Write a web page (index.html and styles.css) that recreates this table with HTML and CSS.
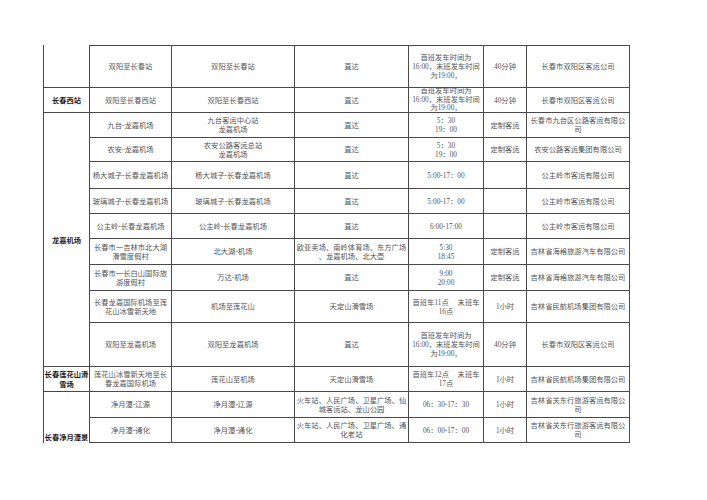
FILE: index.html
```html
<!DOCTYPE html>
<html lang="zh-CN">
<head>
<meta charset="utf-8">
<title>长春客运线路</title>
<link rel="stylesheet" href="styles.css">
</head>
<body>
<div class="sheet">
  <!-- row 1 -->
  <div class="c l h"></div>
  <div class="c t">双阳至长春站</div>
  <div class="c t">双阳至长春站</div>
  <div class="c t">直达</div>
  <div class="c t">首班发车时间为<br>16:00，末班发车时间<br>为19:00，</div>
  <div class="c t">40分钟</div>
  <div class="c t">长春市双阳区客运公司</div>
  <!-- row 2 -->
  <div class="c l h">长春西站</div>
  <div class="c">双阳至长春西站</div>
  <div class="c">双阳至长春西站</div>
  <div class="c">直达</div>
  <div class="c tight">首班发车时间为<br>16:00，末班发车时间<br>为19:00，</div>
  <div class="c">40分钟</div>
  <div class="c">长春市双阳区客运公司</div>
  <!-- row 3 -->
  <div class="c l h span9">龙嘉机场</div>
  <div class="c">九台-龙嘉机场</div>
  <div class="c">九台客运中心站<br>龙嘉机场</div>
  <div class="c">直达</div>
  <div class="c">5：30<br>19：00</div>
  <div class="c">定制客运</div>
  <div class="c">长春市九台区公路客运有限公<br>司</div>
  <!-- row 4 -->
  <div class="c">农安-龙嘉机场</div>
  <div class="c">农安公路客运总站<br>龙嘉机场</div>
  <div class="c">直达</div>
  <div class="c">5：30<br>19：00</div>
  <div class="c">定制客运</div>
  <div class="c">农安公路客运集团有限公司</div>
  <!-- row 5 -->
  <div class="c">杨大城子-长春龙嘉机场</div>
  <div class="c">杨大城子-长春龙嘉机场</div>
  <div class="c">直达</div>
  <div class="c">5:00-17：00</div>
  <div class="c"></div>
  <div class="c">公主岭市客运有限公司</div>
  <!-- row 6 -->
  <div class="c">玻璃城子-长春龙嘉机场</div>
  <div class="c">玻璃城子-长春龙嘉机场</div>
  <div class="c">直达</div>
  <div class="c">5:00-17：00</div>
  <div class="c"></div>
  <div class="c">公主岭市客运有限公司</div>
  <!-- row 7 -->
  <div class="c">公主岭-长春龙嘉机场</div>
  <div class="c">公主岭-长春龙嘉机场</div>
  <div class="c">直达</div>
  <div class="c">6:00-17:00</div>
  <div class="c"></div>
  <div class="c">公主岭市客运有限公司</div>
  <!-- row 8 -->
  <div class="c">长春市一吉林市北大湖<br>滑雪度假村</div>
  <div class="c">北大湖-机场</div>
  <div class="c">欧亚卖场、南岭体育场、东方广场<br>、龙嘉机场、北大壶</div>
  <div class="c">5:30<br>18:45</div>
  <div class="c">定制客运</div>
  <div class="c">吉林省海格旅游汽车有限公司</div>
  <!-- row 9 -->
  <div class="c">长春市一长白山国际旅<br>游度假村</div>
  <div class="c">万达-机场</div>
  <div class="c">直达</div>
  <div class="c">9:00<br>20:00</div>
  <div class="c">定制客运</div>
  <div class="c">吉林省海格旅游汽车有限公司</div>
  <!-- row 10 -->
  <div class="c">长春龙嘉国际机场至莲<br>花山冰雪新天地</div>
  <div class="c">机场至莲花山</div>
  <div class="c">天定山滑雪场</div>
  <div class="c"><span class="just"><span>首班车11点</span><span>末班车</span></span>16点</div>
  <div class="c">1小时</div>
  <div class="c">吉林省民航机场集团有限公司</div>
  <!-- row 11 -->
  <div class="c">双阳至龙嘉机场</div>
  <div class="c">双阳至龙嘉机场</div>
  <div class="c">直达</div>
  <div class="c">首班发车时间为<br>16:00，末班发车时间<br>为19:00，</div>
  <div class="c">40分钟</div>
  <div class="c">长春市双阳区客运公司</div>
  <!-- row 12 -->
  <div class="c l h">长春莲花山滑<br>雪场</div>
  <div class="c">莲花山冰雪新天地至长<br>春龙嘉国际机场</div>
  <div class="c">莲花山至机场</div>
  <div class="c">天定山滑雪场</div>
  <div class="c"><span class="just"><span>首班车12点</span><span>末班车</span></span>17点</div>
  <div class="c">1小时</div>
  <div class="c">吉林省民航机场集团有限公司</div>
  <!-- row 13 -->
  <div class="c l h span2 bottom">长春净月潭景</div>
  <div class="c">净月潭-辽源</div>
  <div class="c">净月潭-辽源</div>
  <div class="c">火车站、人民广场、卫星广场、仙<br>城客运站、龙山公园</div>
  <div class="c">06：30-17：30</div>
  <div class="c">1小时</div>
  <div class="c">吉林省关东行旅游客运有限公<br>司</div>
  <!-- row 14 -->
  <div class="c">净月潭-通化</div>
  <div class="c">净月潭-通化</div>
  <div class="c">火车站、人民广场、卫星广场、通<br>化老站</div>
  <div class="c">06：00-17：00</div>
  <div class="c">1小时</div>
  <div class="c">吉林省关东行旅游客运有限公<br>司</div>
</div>
</body>
</html>
```

FILE: styles.css
```css
html, body {
  margin: 0;
  padding: 0;
  background: #ffffff;
}

body {
  width: 707px;
  height: 500px;
  overflow: hidden;
}

.sheet {
  display: grid;
  grid-template-columns: 47px 82px 123px 114px 75px 43px 103px;
  grid-template-rows: 43px 25px 25px 24px 27px 25px 25px 26px 26px 32px 44px 25px 26px 25px;
  margin: 45px 0 0 43px;
  width: max-content;
  font-family: "Liberation Serif", "Noto Sans CJK SC", serif;
  font-size: 7.3px;
  line-height: 9px;
  color: #555555;
}

.c {
  box-sizing: border-box;
  border-right: 1px solid #4a4a4a;
  border-bottom: 1px solid #4a4a4a;
  display: flex;
  flex-direction: column;
  align-items: center;
  justify-content: center;
  text-align: center;
  white-space: nowrap;
  overflow: visible;
  padding: 0 1px;
}

.t {
  border-top: 1px solid #4a4a4a;
}

.l {
  grid-column: 1;
  border-left: 1px solid #4a4a4a;
}

.h {
  font-family: "Noto Sans CJK SC", sans-serif;
  font-weight: 700;
  color: #1e1e1e;
  line-height: 10px;
}

.span9 {
  grid-row: span 9;
}

.span2 {
  grid-row: span 2;
}

.bottom {
  justify-content: flex-end;
  border-bottom: none;
  padding-bottom: 1px;
}

.tight {
  line-height: 8.5px;
}

.just {
  display: flex;
  justify-content: space-between;
  width: 67px;
}
```
